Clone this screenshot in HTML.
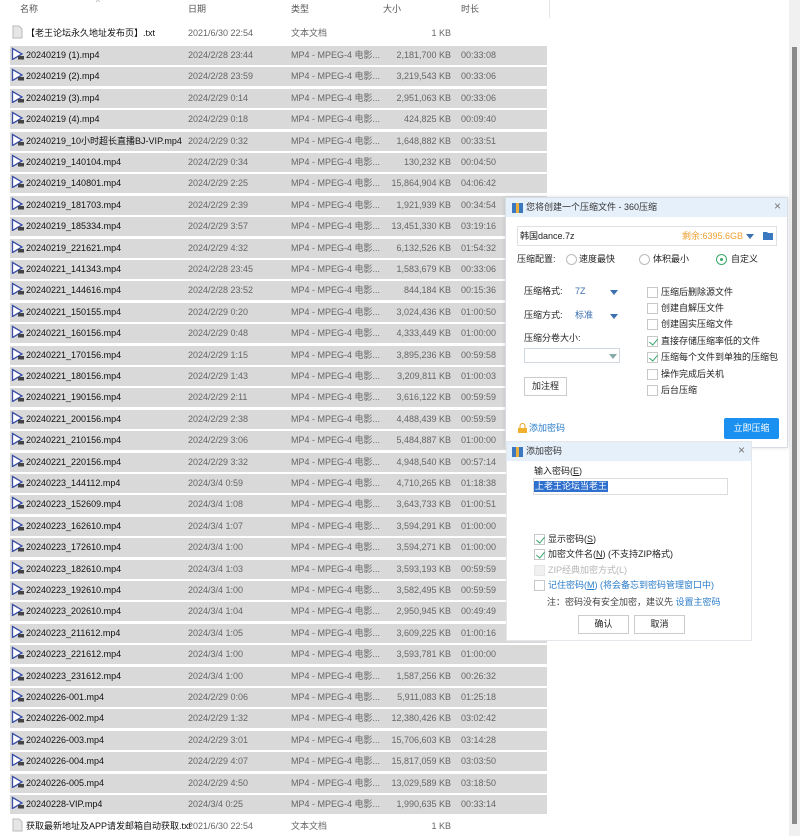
<!DOCTYPE html>
<html><head><meta charset="utf-8"><style>
*{margin:0;padding:0;box-sizing:border-box}
body{width:800px;height:836px;position:relative;overflow:hidden;background:#fff;font-family:"Liberation Sans","Noto Sans CJK SC",sans-serif;font-size:9px;line-height:11px;color:#222}
.a{position:absolute;white-space:nowrap;line-height:11px}
.h{position:absolute;top:4px;color:#555;line-height:11px}
.r{position:absolute;left:10px;width:537px;height:19px;background:#d9d9d9}
.r span{position:absolute;top:4px;white-space:nowrap;line-height:11px;height:11px;overflow:hidden}
.r svg{position:absolute;top:1px;left:1px;display:block}
.n{left:16px;color:#111;max-width:160px}
.d{left:178px;color:#666}
.t{left:281px;color:#666}
.s{right:96px;color:#666}
.l{left:451px;color:#666}
.tx{background:none}
.dlg{position:absolute;background:#fff;border:1px solid #d8dde3;box-shadow:0 0 4px rgba(0,0,0,.12)}
.tb{position:absolute;left:0;right:0;top:0;height:19px;background:#e6f0fb;color:#333}
.cb{position:absolute;width:11px;height:11px;border:1px solid #c8c8c8;background:#fff}
.ck::after{content:"";position:absolute;left:3px;top:0px;width:4px;height:7px;border:solid #3aa66a;border-width:0 1.3px 1.3px 0;transform:rotate(40deg)}
.rd{position:absolute;width:11px;height:11px;border:1px solid #bbb;border-radius:50%;background:#fff}
.caret{position:absolute;width:0;height:0;border-left:4px solid transparent;border-right:4px solid transparent;border-top:5px solid #3a6fb0}
.btn{position:absolute;border:1px solid #ccc;background:#fff;text-align:center;color:#222}
</style></head><body>
<div class="h" style="left:20px">名称</div>
<div class="a" style="left:96px;top:-3px;color:#999;font-size:8px">^</div>
<div class="h" style="left:188px">日期</div>
<div class="h" style="left:291px">类型</div>
<div class="h" style="left:383px">大小</div>
<div class="h" style="left:461px">时长</div>
<div style="position:absolute;left:549px;top:0;width:1px;height:18px;background:#e5e5e5"></div>
<div style="position:absolute;left:789px;top:0;width:11px;height:836px;background:#f0f0f0"></div>
<div style="position:absolute;left:792px;top:47px;width:5px;height:777px;background:#8a8a8a"></div>

<div class="r tx" style="top:24px"><svg width="12" height="14"><path d="M2 1h6l3 3v9H2z" fill="#e6e6e6" stroke="#bbb"/></svg><span class="n" style="max-width:170px">【老王论坛永久地址发布页】.txt</span><span class="d">2021/6/30 22:54</span><span class="t">文本文档</span><span class="s">1 KB</span></div>
<div class="r tx" style="top:817px"><svg width="12" height="14"><path d="M2 1h6l3 3v9H2z" fill="#e6e6e6" stroke="#bbb"/></svg><span class="n" style="max-width:170px">获取最新地址及APP请发邮箱自动获取.txt</span><span class="d">2021/6/30 22:54</span><span class="t">文本文档</span><span class="s">1 KB</span></div>

<svg width="0" height="0" style="position:absolute"><defs><symbol id="v" viewBox="0 0 13 13"><path d="M1.5 1.5L11 7 1.5 12.5z" fill="#fff" stroke="#3b4fa8" stroke-width="1.3"/><rect x="7" y="9" width="6" height="3.5" fill="#444"/></symbol></defs></svg>

<div class="r" style="top:46px"><svg width="13" height="13"><use href="#v"/></svg><span class="n">20240219 (1).mp4</span><span class="d">2024/2/28 23:44</span><span class="t">MP4 - MPEG-4 电影...</span><span class="s">2,181,700 KB</span><span class="l">00:33:08</span></div>
<div class="r" style="top:67px"><svg width="13" height="13"><use href="#v"/></svg><span class="n">20240219 (2).mp4</span><span class="d">2024/2/28 23:59</span><span class="t">MP4 - MPEG-4 电影...</span><span class="s">3,219,543 KB</span><span class="l">00:33:06</span></div>
<div class="r" style="top:89px"><svg width="13" height="13"><use href="#v"/></svg><span class="n">20240219 (3).mp4</span><span class="d">2024/2/29 0:14</span><span class="t">MP4 - MPEG-4 电影...</span><span class="s">2,951,063 KB</span><span class="l">00:33:06</span></div>
<div class="r" style="top:110px"><svg width="13" height="13"><use href="#v"/></svg><span class="n">20240219 (4).mp4</span><span class="d">2024/2/29 0:18</span><span class="t">MP4 - MPEG-4 电影...</span><span class="s">424,825 KB</span><span class="l">00:09:40</span></div>
<div class="r" style="top:132px"><svg width="13" height="13"><use href="#v"/></svg><span class="n">20240219_10小时超长直播BJ-VIP.mp4</span><span class="d">2024/2/29 0:32</span><span class="t">MP4 - MPEG-4 电影...</span><span class="s">1,648,882 KB</span><span class="l">00:33:51</span></div>
<div class="r" style="top:153px"><svg width="13" height="13"><use href="#v"/></svg><span class="n">20240219_140104.mp4</span><span class="d">2024/2/29 0:34</span><span class="t">MP4 - MPEG-4 电影...</span><span class="s">130,232 KB</span><span class="l">00:04:50</span></div>
<div class="r" style="top:174px"><svg width="13" height="13"><use href="#v"/></svg><span class="n">20240219_140801.mp4</span><span class="d">2024/2/29 2:25</span><span class="t">MP4 - MPEG-4 电影...</span><span class="s">15,864,904 KB</span><span class="l">04:06:42</span></div>
<div class="r" style="top:196px"><svg width="13" height="13"><use href="#v"/></svg><span class="n">20240219_181703.mp4</span><span class="d">2024/2/29 2:39</span><span class="t">MP4 - MPEG-4 电影...</span><span class="s">1,921,939 KB</span><span class="l">00:34:54</span></div>
<div class="r" style="top:217px"><svg width="13" height="13"><use href="#v"/></svg><span class="n">20240219_185334.mp4</span><span class="d">2024/2/29 3:57</span><span class="t">MP4 - MPEG-4 电影...</span><span class="s">13,451,330 KB</span><span class="l">03:19:16</span></div>
<div class="r" style="top:239px"><svg width="13" height="13"><use href="#v"/></svg><span class="n">20240219_221621.mp4</span><span class="d">2024/2/29 4:32</span><span class="t">MP4 - MPEG-4 电影...</span><span class="s">6,132,526 KB</span><span class="l">01:54:32</span></div>
<div class="r" style="top:260px"><svg width="13" height="13"><use href="#v"/></svg><span class="n">20240221_141343.mp4</span><span class="d">2024/2/28 23:45</span><span class="t">MP4 - MPEG-4 电影...</span><span class="s">1,583,679 KB</span><span class="l">00:33:06</span></div>
<div class="r" style="top:281px"><svg width="13" height="13"><use href="#v"/></svg><span class="n">20240221_144616.mp4</span><span class="d">2024/2/28 23:52</span><span class="t">MP4 - MPEG-4 电影...</span><span class="s">844,184 KB</span><span class="l">00:15:36</span></div>
<div class="r" style="top:303px"><svg width="13" height="13"><use href="#v"/></svg><span class="n">20240221_150155.mp4</span><span class="d">2024/2/29 0:20</span><span class="t">MP4 - MPEG-4 电影...</span><span class="s">3,024,436 KB</span><span class="l">01:00:50</span></div>
<div class="r" style="top:324px"><svg width="13" height="13"><use href="#v"/></svg><span class="n">20240221_160156.mp4</span><span class="d">2024/2/29 0:48</span><span class="t">MP4 - MPEG-4 电影...</span><span class="s">4,333,449 KB</span><span class="l">01:00:00</span></div>
<div class="r" style="top:346px"><svg width="13" height="13"><use href="#v"/></svg><span class="n">20240221_170156.mp4</span><span class="d">2024/2/29 1:15</span><span class="t">MP4 - MPEG-4 电影...</span><span class="s">3,895,236 KB</span><span class="l">00:59:58</span></div>
<div class="r" style="top:367px"><svg width="13" height="13"><use href="#v"/></svg><span class="n">20240221_180156.mp4</span><span class="d">2024/2/29 1:43</span><span class="t">MP4 - MPEG-4 电影...</span><span class="s">3,209,811 KB</span><span class="l">01:00:03</span></div>
<div class="r" style="top:388px"><svg width="13" height="13"><use href="#v"/></svg><span class="n">20240221_190156.mp4</span><span class="d">2024/2/29 2:11</span><span class="t">MP4 - MPEG-4 电影...</span><span class="s">3,616,122 KB</span><span class="l">00:59:59</span></div>
<div class="r" style="top:410px"><svg width="13" height="13"><use href="#v"/></svg><span class="n">20240221_200156.mp4</span><span class="d">2024/2/29 2:38</span><span class="t">MP4 - MPEG-4 电影...</span><span class="s">4,488,439 KB</span><span class="l">00:59:59</span></div>
<div class="r" style="top:431px"><svg width="13" height="13"><use href="#v"/></svg><span class="n">20240221_210156.mp4</span><span class="d">2024/2/29 3:06</span><span class="t">MP4 - MPEG-4 电影...</span><span class="s">5,484,887 KB</span><span class="l">01:00:00</span></div>
<div class="r" style="top:453px"><svg width="13" height="13"><use href="#v"/></svg><span class="n">20240221_220156.mp4</span><span class="d">2024/2/29 3:32</span><span class="t">MP4 - MPEG-4 电影...</span><span class="s">4,948,540 KB</span><span class="l">00:57:14</span></div>
<div class="r" style="top:474px"><svg width="13" height="13"><use href="#v"/></svg><span class="n">20240223_144112.mp4</span><span class="d">2024/3/4 0:59</span><span class="t">MP4 - MPEG-4 电影...</span><span class="s">4,710,265 KB</span><span class="l">01:18:38</span></div>
<div class="r" style="top:495px"><svg width="13" height="13"><use href="#v"/></svg><span class="n">20240223_152609.mp4</span><span class="d">2024/3/4 1:08</span><span class="t">MP4 - MPEG-4 电影...</span><span class="s">3,643,733 KB</span><span class="l">01:00:51</span></div>
<div class="r" style="top:517px"><svg width="13" height="13"><use href="#v"/></svg><span class="n">20240223_162610.mp4</span><span class="d">2024/3/4 1:07</span><span class="t">MP4 - MPEG-4 电影...</span><span class="s">3,594,291 KB</span><span class="l">01:00:00</span></div>
<div class="r" style="top:538px"><svg width="13" height="13"><use href="#v"/></svg><span class="n">20240223_172610.mp4</span><span class="d">2024/3/4 1:00</span><span class="t">MP4 - MPEG-4 电影...</span><span class="s">3,594,271 KB</span><span class="l">01:00:00</span></div>
<div class="r" style="top:560px"><svg width="13" height="13"><use href="#v"/></svg><span class="n">20240223_182610.mp4</span><span class="d">2024/3/4 1:03</span><span class="t">MP4 - MPEG-4 电影...</span><span class="s">3,593,193 KB</span><span class="l">00:59:59</span></div>
<div class="r" style="top:581px"><svg width="13" height="13"><use href="#v"/></svg><span class="n">20240223_192610.mp4</span><span class="d">2024/3/4 1:00</span><span class="t">MP4 - MPEG-4 电影...</span><span class="s">3,582,495 KB</span><span class="l">00:59:59</span></div>
<div class="r" style="top:602px"><svg width="13" height="13"><use href="#v"/></svg><span class="n">20240223_202610.mp4</span><span class="d">2024/3/4 1:04</span><span class="t">MP4 - MPEG-4 电影...</span><span class="s">2,950,945 KB</span><span class="l">00:49:49</span></div>
<div class="r" style="top:624px"><svg width="13" height="13"><use href="#v"/></svg><span class="n">20240223_211612.mp4</span><span class="d">2024/3/4 1:05</span><span class="t">MP4 - MPEG-4 电影...</span><span class="s">3,609,225 KB</span><span class="l">01:00:16</span></div>
<div class="r" style="top:645px"><svg width="13" height="13"><use href="#v"/></svg><span class="n">20240223_221612.mp4</span><span class="d">2024/3/4 1:00</span><span class="t">MP4 - MPEG-4 电影...</span><span class="s">3,593,781 KB</span><span class="l">01:00:00</span></div>
<div class="r" style="top:667px"><svg width="13" height="13"><use href="#v"/></svg><span class="n">20240223_231612.mp4</span><span class="d">2024/3/4 1:00</span><span class="t">MP4 - MPEG-4 电影...</span><span class="s">1,587,256 KB</span><span class="l">00:26:32</span></div>
<div class="r" style="top:688px"><svg width="13" height="13"><use href="#v"/></svg><span class="n">20240226-001.mp4</span><span class="d">2024/2/29 0:06</span><span class="t">MP4 - MPEG-4 电影...</span><span class="s">5,911,083 KB</span><span class="l">01:25:18</span></div>
<div class="r" style="top:709px"><svg width="13" height="13"><use href="#v"/></svg><span class="n">20240226-002.mp4</span><span class="d">2024/2/29 1:32</span><span class="t">MP4 - MPEG-4 电影...</span><span class="s">12,380,426 KB</span><span class="l">03:02:42</span></div>
<div class="r" style="top:731px"><svg width="13" height="13"><use href="#v"/></svg><span class="n">20240226-003.mp4</span><span class="d">2024/2/29 3:01</span><span class="t">MP4 - MPEG-4 电影...</span><span class="s">15,706,603 KB</span><span class="l">03:14:28</span></div>
<div class="r" style="top:752px"><svg width="13" height="13"><use href="#v"/></svg><span class="n">20240226-004.mp4</span><span class="d">2024/2/29 4:07</span><span class="t">MP4 - MPEG-4 电影...</span><span class="s">15,817,059 KB</span><span class="l">03:03:50</span></div>
<div class="r" style="top:774px"><svg width="13" height="13"><use href="#v"/></svg><span class="n">20240226-005.mp4</span><span class="d">2024/2/29 4:50</span><span class="t">MP4 - MPEG-4 电影...</span><span class="s">13,029,589 KB</span><span class="l">03:18:50</span></div>
<div class="r" style="top:795px"><svg width="13" height="13"><use href="#v"/></svg><span class="n">20240228-VIP.mp4</span><span class="d">2024/3/4 0:25</span><span class="t">MP4 - MPEG-4 电影...</span><span class="s">1,990,635 KB</span><span class="l">00:33:14</span></div>

<!-- Dialog 1 -->
<div class="dlg" style="left:505px;top:197px;width:283px;height:251px">
 <div class="tb"><svg class="a" style="left:6px;top:4px" width="11" height="11"><rect x="0" y="1" width="11" height="10" fill="#3b78c0"/><rect x="4" y="1" width="3" height="10" fill="#e8b040"/></svg><span class="a" style="left:20px;top:4px">您将创建一个压缩文件 - 360压缩</span><span class="a" style="left:268px;top:3px;color:#777;font-size:12px">×</span></div>
 <div class="a" style="left:11px;top:28px;width:260px;height:20px;border:1px solid #dde1e6"></div>
 <span class="a" style="left:14px;top:33px">韩国dance.7z</span>
 <span class="a" style="left:176px;top:33px;color:#f0a030">剩余:6395.6GB</span>
 <div class="caret" style="left:240px;top:36px"></div>
 <svg class="a" style="left:257px;top:33px" width="10" height="9"><path d="M0 1h4l1 1h5v7H0z" fill="#3a78c0"/></svg>
 <span class="a" style="left:11px;top:56px">压缩配置:</span>
 <div class="rd" style="left:60px;top:56px"></div><span class="a" style="left:73px;top:56px">速度最快</span>
 <div class="rd" style="left:133px;top:56px"></div><span class="a" style="left:147px;top:56px">体积最小</span>
 <div class="rd" style="left:210px;top:56px;border-color:#3aa66a"><div style="position:absolute;left:3px;top:3px;width:3px;height:3px;border-radius:50%;background:#3aa66a"></div></div><span class="a" style="left:225px;top:56px">自定义</span>
 <span class="a" style="left:18px;top:88px">压缩格式:</span><span class="a" style="left:69px;top:88px;color:#3a6fb0">7Z</span><div class="caret" style="left:104px;top:92px"></div>
 <span class="a" style="left:18px;top:112px">压缩方式:</span><span class="a" style="left:69px;top:112px;color:#3a6fb0">标准</span><div class="caret" style="left:104px;top:116px"></div>
 <span class="a" style="left:18px;top:135px">压缩分卷大小:</span>
 <div class="a" style="left:18px;top:150px;width:96px;height:15px;border:1px solid #cfd8e3"></div><div class="caret" style="left:103px;top:156px;border-top-color:#8aa"></div>
 <div class="btn" style="left:18px;top:179px;width:43px;height:19px;line-height:17px">加注程</div>
 <div class="cb" style="left:141px;top:89px"></div><span class="a" style="left:155px;top:89px">压缩后删除源文件</span>
 <div class="cb" style="left:141px;top:105px"></div><span class="a" style="left:155px;top:105px">创建自解压文件</span>
 <div class="cb" style="left:141px;top:121px"></div><span class="a" style="left:155px;top:121px">创建固实压缩文件</span>
 <div class="cb ck" style="left:141px;top:138px"></div><span class="a" style="left:155px;top:138px">直接存储压缩率低的文件</span>
 <div class="cb ck" style="left:141px;top:154px"></div><span class="a" style="left:155px;top:154px">压缩每个文件到单独的压缩包</span>
 <div class="cb" style="left:141px;top:171px"></div><span class="a" style="left:155px;top:171px">操作完成后关机</span>
 <div class="cb" style="left:141px;top:187px"></div><span class="a" style="left:155px;top:187px">后台压缩</span>
 <svg class="a" style="left:12px;top:225px" width="9" height="10"><path d="M2 5V3a2.5 2.5 0 0 1 5 0v2" fill="none" stroke="#e8a020"/><rect x="0" y="5" width="9" height="5" fill="#f0b030"/></svg>
 <span class="a" style="left:23px;top:225px;color:#2a7cc8">添加密码</span>
 <div class="a" style="left:218px;top:220px;width:55px;height:21px;background:#1a90f0;border-radius:2px;color:#fff;text-align:center;line-height:21px">立即压缩</div>
</div>

<!-- Dialog 2 -->
<div class="dlg" style="left:506px;top:441px;width:246px;height:200px;box-shadow:none;border-color:#e3e6ea">
 <div class="tb"><svg class="a" style="left:5px;top:4px" width="11" height="11"><rect x="0" y="1" width="11" height="10" fill="#3b78c0"/><rect x="4" y="1" width="3" height="10" fill="#e8b040"/></svg><span class="a" style="left:19px;top:4px">添加密码</span><span class="a" style="left:231px;top:3px;color:#777;font-size:12px">×</span></div>
 <span class="a" style="left:27px;top:24px">输入密码(<u>E</u>)</span>
 <div class="a" style="left:26px;top:36px;width:195px;height:17px;border:1px solid #dcdcdc"></div>
 <span class="a" style="left:27px;top:39px;background:#2f6fce;color:#fff;padding:0 1px">上老王论坛当老王</span>
 <div class="cb ck" style="left:27px;top:92px"></div><span class="a" style="left:41px;top:92px">显示密码(<u>S</u>)</span>
 <div class="cb ck" style="left:27px;top:107px"></div><span class="a" style="left:41px;top:107px">加密文件名(<u>N</u>) (不支持ZIP格式)</span>
 <div class="cb" style="left:27px;top:123px;background:#f0f0f0;border-color:#e6e6e6"></div><span class="a" style="left:41px;top:123px;color:#b5b5b5">ZIP经典加密方式(L)</span>
 <div class="cb" style="left:27px;top:138px"></div><span class="a" style="left:41px;top:138px;color:#2a7cc8">记住密码(<u>M</u>) (将会备忘到密码管理窗口中)</span>
 <span class="a" style="left:40px;top:155px;color:#444">注：密码没有安全加密，建议先 <span style="color:#2a7cc8">设置主密码</span></span>
 <div class="btn" style="left:71px;top:173px;width:51px;height:19px;line-height:17px">确认</div>
 <div class="btn" style="left:127px;top:173px;width:51px;height:19px;line-height:17px">取消</div>
</div>
</body></html>
